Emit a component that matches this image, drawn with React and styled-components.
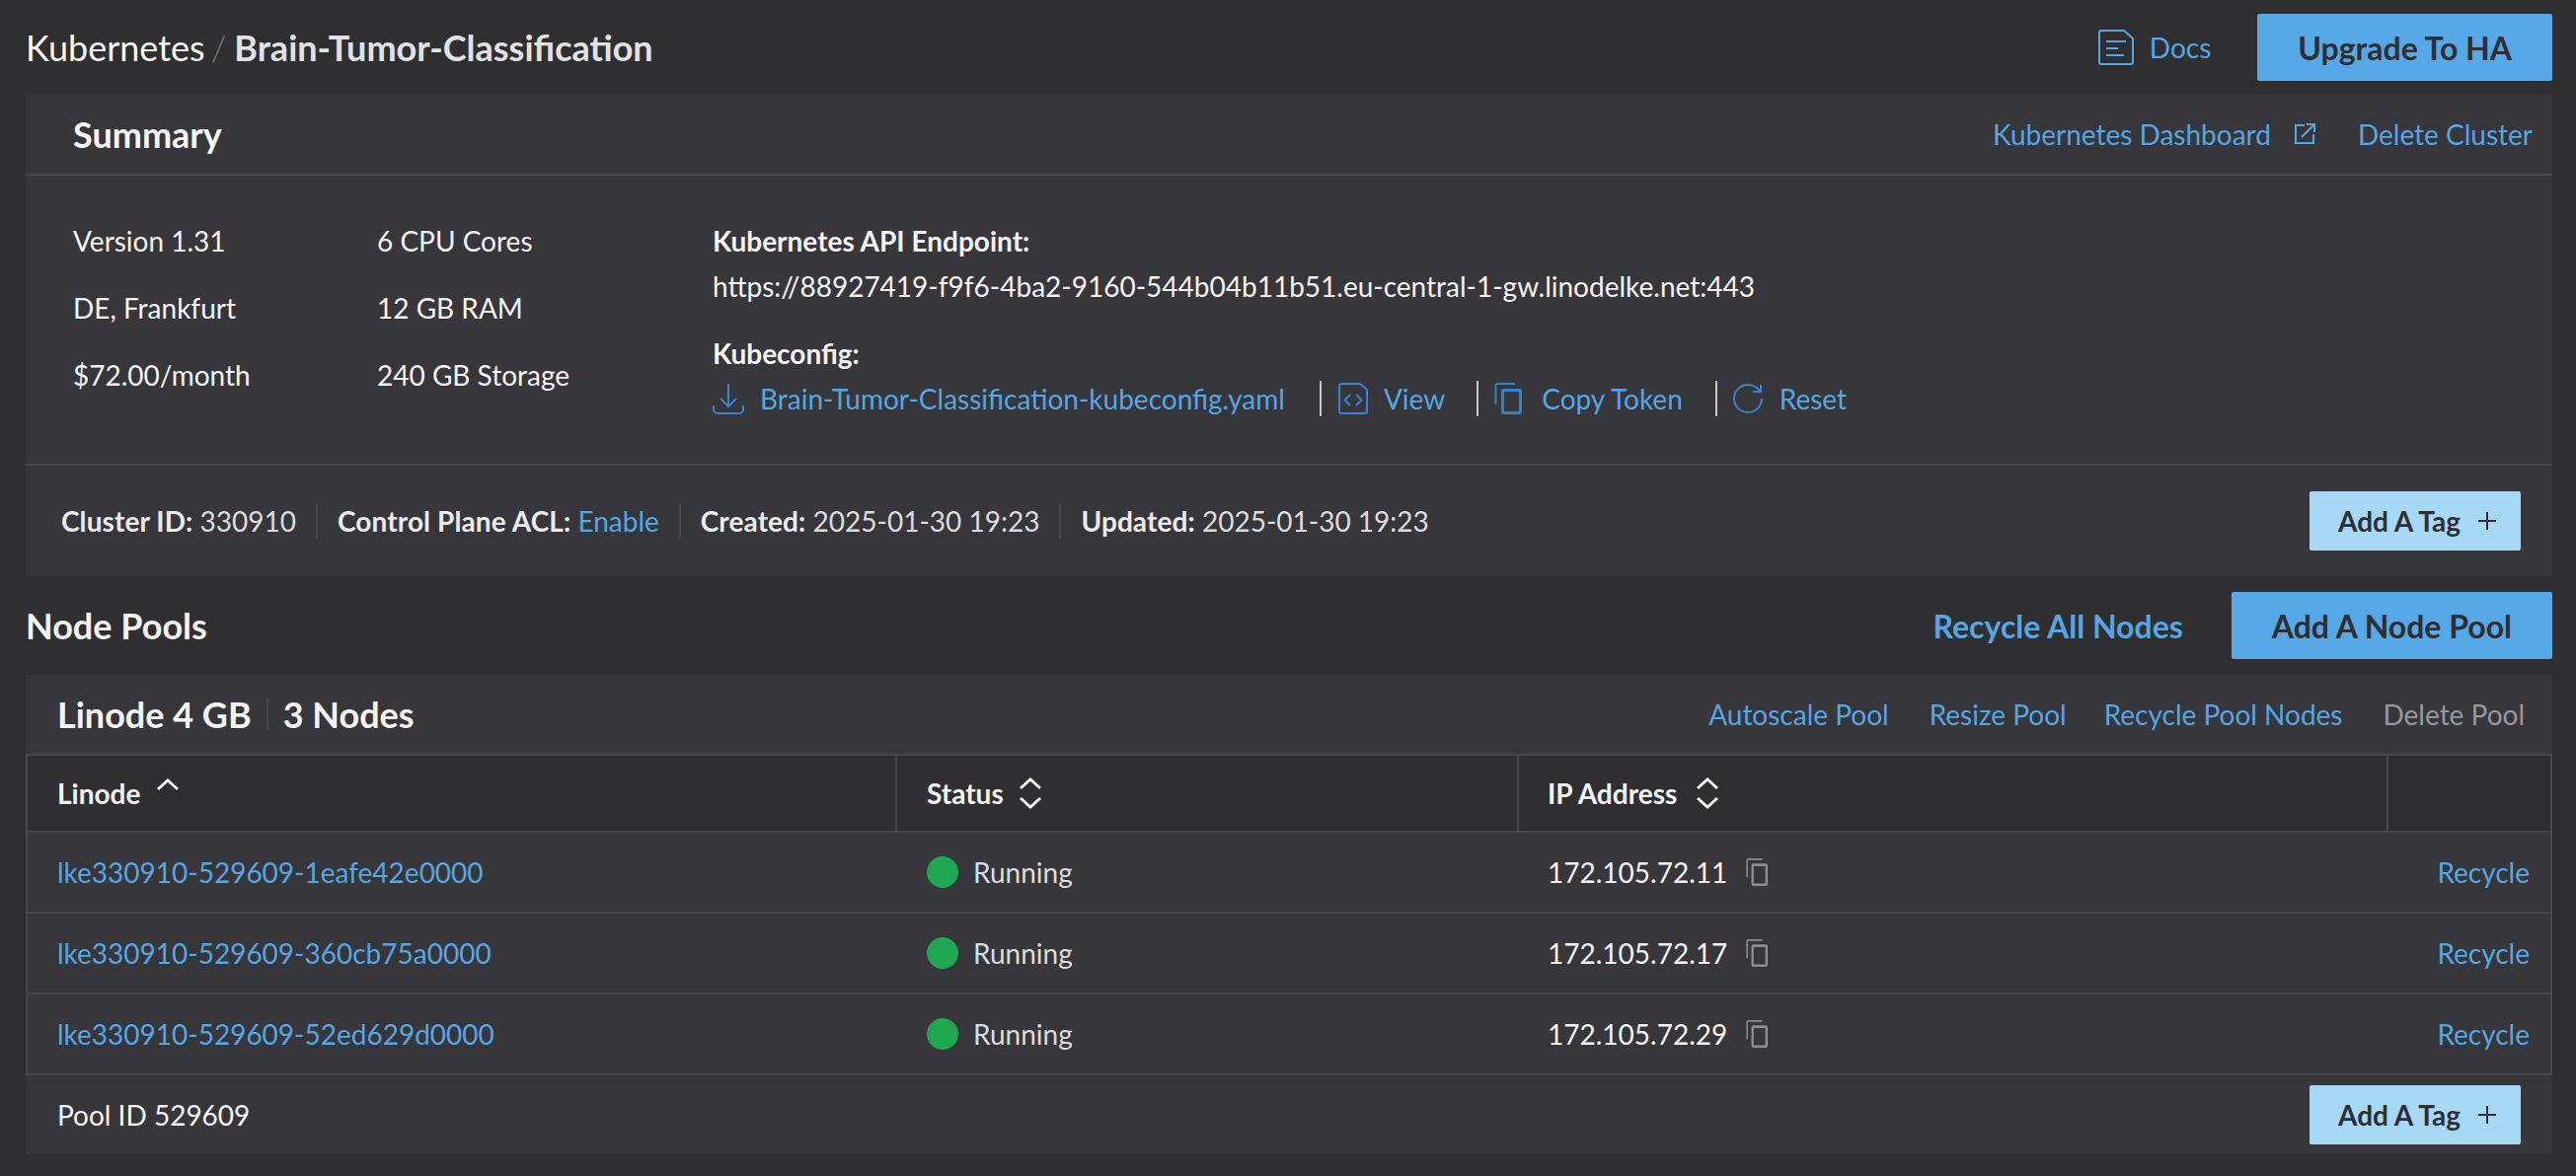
import React from 'react'
import styled, { createGlobalStyle } from 'styled-components'

const GlobalStyle = createGlobalStyle`
  html, body { margin: 0; padding: 0; background: #2f2f31; }
  body { font-family: Lato, "Open Sans", sans-serif; color: #f4f4f5; }
  * { box-sizing: border-box; }
`

const LINK = '#56a6e2'
const ICON = '#3b82d0'

const Page = styled.div`
  width: 2610px;
  height: 1192px;
  padding: 0 24px 0 26px;
  background: #2f2f31;
  font-size: 28px;
  overflow: hidden;
`

const TopBar = styled.header`
  height: 96px;
  display: flex;
  align-items: center;
  justify-content: space-between;
`

const Crumbs = styled.h1`
  margin: 0;
  display: flex;
  align-items: center;
  font-size: 36px;
  font-weight: 400;
  color: #f6f6f7;
`

const Slash = styled.span`
  margin: 0 8px 0 6px;
  color: #77777c;
  font-weight: 300;
`

const CrumbStrong = styled.span`
  font-weight: 700;
  color: #e2e2e5;
`

const TopActions = styled.div`
  display: flex;
  align-items: center;
`

const DocsLink = styled.a`
  display: flex;
  align-items: center;
  gap: 16px;
  margin-right: 47px;
  color: ${LINK};
`

const PrimaryButton = styled.button`
  height: 68px;
  padding: 0 ${({ $pad }) => $pad}px;
  border: none;
  border-radius: 2px;
  background: #56a8e6;
  color: #2f2f33;
  font: 700 32px Lato, sans-serif;
`

const Panel = styled.section`
  background: #36363b;
`

const SummaryHead = styled.div`
  height: 82px;
  padding: 0 20px 0 48px;
  display: flex;
  align-items: center;
  justify-content: space-between;
  border-bottom: 2px solid #47474c;
`

const SummaryTitle = styled.h2`
  margin: 0;
  font-size: 36px;
  font-weight: 700;
  color: #f6f6f7;
`

const HeadLinks = styled.div`
  display: flex;
  align-items: center;
`

const TextLink = styled.a`
  display: inline-flex;
  align-items: center;
  color: ${({ $muted }) => ($muted ? '#98989d' : LINK)};
  margin-left: ${({ $ml }) => $ml || 0}px;
  white-space: nowrap;
`

const SummaryBody = styled.div`
  height: 294px;
  padding: 32px 0 0 48px;
  display: grid;
  grid-template-columns: 308px 340px 1fr;
  border-bottom: 2px solid #47474c;
`

const SpecLine = styled.div`
  height: 68px;
  line-height: 68px;
`

const Endpoint = styled.div`
  margin-top: 11px;
`

const InfoLine = styled.div`
  height: 46px;
  line-height: 46px;
  font-weight: ${({ $bold }) => ($bold ? 700 : 400)};
  margin-top: ${({ $gap }) => $gap || 0}px;
`

const ConfigRow = styled.div`
  height: 46px;
  display: flex;
  align-items: center;
`

const ConfigLink = styled.a`
  display: flex;
  align-items: center;
  gap: ${({ $gap }) => $gap}px;
  color: ${LINK};
  white-space: nowrap;
`

const ConfigSep = styled.span`
  width: 2px;
  height: 36px;
  margin: 0 ${({ $r }) => $r}px 0 ${({ $l }) => $l}px;
  background: #c9c9cc;
`

const MetaRow = styled.div`
  height: 112px;
  padding: 0 32px 0 36px;
  display: flex;
  align-items: center;
  color: #dcdcdf;
`

const MetaItem = styled.span`
  color: #dcdcdf;
  b { color: #ececee; font-weight: 700; letter-spacing: 0.1px; }
  a { color: ${LINK}; }
`

const MetaSep = styled.span`
  width: 2px;
  height: 36px;
  margin: 0 20px;
  background: #47474c;
`

const TagButton = styled.button`
  width: 214px;
  height: 60px;
  margin-left: auto;
  padding: 0 0 0 29px;
  display: flex;
  align-items: center;
  gap: 18px;
  border: none;
  border-radius: 2px;
  background: #a7d9f7;
  color: #2f2f33;
  font: 700 28px Lato, sans-serif;
`

const SectionHead = styled.div`
  height: 100px;
  display: flex;
  align-items: center;
  justify-content: space-between;
`

const SectionTitle = styled.h2`
  margin: 0;
  font-size: 36px;
  font-weight: 700;
  color: #f2f2f3;
`

const SectionActions = styled.div`
  display: flex;
  align-items: center;
  gap: 49px;
`

const BoldLink = styled.a`
  color: ${LINK};
  font-size: 32px;
  font-weight: 700;
`

const PoolHead = styled.div`
  height: 80px;
  padding: 0 28px 0 32px;
  display: flex;
  align-items: center;
  justify-content: space-between;
`

const PoolTitle = styled.h3`
  margin: 0;
  display: flex;
  align-items: center;
  font-size: 36px;
  font-weight: 700;
  color: #f4f4f5;
`

const PoolSep = styled.span`
  width: 2px;
  height: 32px;
  margin: 0 15px;
  background: #47474c;
`

const NodeTable = styled.div`
  border: 2px solid #47474c;
`

const HeadRow = styled.div`
  height: 76px;
  display: grid;
  grid-template-columns: 881px 630px 881px 1fr;
  background: #2f2f31;
`

const HeadCell = styled.div`
  padding-left: ${({ $pad }) => $pad}px;
  display: flex;
  align-items: center;
  gap: ${({ $gap }) => $gap || 16}px;
  font-weight: 700;
  border-right: ${({ $last }) => ($last ? 'none' : '2px solid #47474c')};
`

const BodyRow = styled.div`
  height: 82px;
  padding-right: 21px;
  display: grid;
  grid-template-columns: 881px 630px 1fr auto;
  align-items: center;
  border-top: 2px solid #47474c;
`

const NodeLink = styled.a`
  padding-left: 30px;
  color: ${LINK};
`

const StatusCell = styled.div`
  padding-left: 30px;
  display: flex;
  align-items: center;
  gap: 15px;
  color: #dcdcdf;
`

const StatusDot = styled.span`
  width: 32px;
  height: 32px;
  border-radius: 50%;
  background: #1fa651;
`

const IpCell = styled.div`
  padding-left: 29px;
  display: flex;
  align-items: center;
  gap: 19px;
`

const PoolFoot = styled.div`
  height: 80px;
  padding: 0 32px 0 32px;
  display: flex;
  align-items: center;
`

const Chevrons = ({ up = true, down = true }) => (
  <svg width="24" height="32" viewBox="0 0 24 32" fill="none" stroke="#f4f4f5" strokeWidth="3" style={{ marginTop: down ? 0 : 2 }}>
    {up && <path d="M2 11 12 2l10 9" />}
    {down && <path d="M2 21l10 9 10-9" />}
  </svg>
)

const DocsIcon = () => (
  <svg width="36" height="36" viewBox="0 0 36 36" fill="none" stroke={LINK} strokeWidth="2">
    <path d="M3 1h23l9 8v24a2 2 0 0 1-2 2H3a2 2 0 0 1-2-2V3a2 2 0 0 1 2-2z" />
    <path d="M8 12h20M8 19h12M8 26h18" />
  </svg>
)

const ExternalIcon = () => (
  <svg width="22" height="22" viewBox="0 0 22 22" fill="none" stroke={LINK} strokeWidth="2">
    <path d="M11 2H2v18h18v-9" />
    <path d="M8 14 20 2M13 1h8v8" />
  </svg>
)

const DownloadIcon = () => (
  <svg width="32" height="32" viewBox="0 0 32 32" fill="none" stroke={ICON} strokeWidth="2">
    <path d="M16 1v23M8 16l8 8 8-8" />
    <path d="M1 23v4a4 4 0 0 0 4 4h22a4 4 0 0 0 4-4v-4" />
  </svg>
)

const CodeIcon = () => (
  <svg width="30" height="32" viewBox="0 0 30 32" fill="none" stroke={ICON} strokeWidth="2">
    <path d="M3 1h19l7 6v22a2 2 0 0 1-2 2H3a2 2 0 0 1-2-2V3a2 2 0 0 1 2-2z" />
    <path d="M12 12l-5.5 5.5 5.5 5.5M18 12l5.5 5.5-5.5 5.5" />
  </svg>
)

const CopyIcon = ({ color = '#2b84cc', w = 28, h = 32 }) => (
  <svg width={w} height={h} viewBox="0 0 28 32" preserveAspectRatio="none" fill="none" stroke={color}>
    <path d="M1.5 22V3a2 2 0 0 1 2-2H21" strokeWidth="2" />
    <rect x="8.5" y="7.5" width="18" height="23" rx="1" strokeWidth="3" />
  </svg>
)

const ResetIcon = () => (
  <svg width="30" height="30" viewBox="0 0 30 30" fill="none" stroke={ICON} strokeWidth="2">
    <path d="M29 15A14 14 0 1 1 15 1c3.8 0 7.4 1.5 10 4l3 3" />
    <path d="M28 1v7h-8" />
  </svg>
)

const PlusIcon = () => (
  <svg width="18" height="18" viewBox="0 0 18 18" stroke="#2f2f33" strokeWidth="2">
    <path d="M9 0v18M0 9h18" />
  </svg>
)

const nodes = [
  { name: 'lke330910-529609-1eafe42e0000', ip: '172.105.72.11' },
  { name: 'lke330910-529609-360cb75a0000', ip: '172.105.72.17' },
  { name: 'lke330910-529609-52ed629d0000', ip: '172.105.72.29' },
]

function App() {
  return (
    <Page>
      <GlobalStyle />
      <TopBar>
        <Crumbs>
          Kubernetes<Slash>/</Slash><CrumbStrong>Brain-Tumor-Classification</CrumbStrong>
        </Crumbs>
        <TopActions>
          <DocsLink><DocsIcon />Docs</DocsLink>
          <PrimaryButton $pad={41}>Upgrade To HA</PrimaryButton>
        </TopActions>
      </TopBar>

      <Panel>
        <SummaryHead>
          <SummaryTitle>Summary</SummaryTitle>
          <HeadLinks>
            <TextLink>Kubernetes Dashboard</TextLink>
            <TextLink $ml={23}><ExternalIcon /></TextLink>
            <TextLink $ml={43}>Delete Cluster</TextLink>
          </HeadLinks>
        </SummaryHead>
        <SummaryBody>
          <div>
            <SpecLine>Version 1.31</SpecLine>
            <SpecLine>DE, Frankfurt</SpecLine>
            <SpecLine>$72.00/month</SpecLine>
          </div>
          <div>
            <SpecLine>6 CPU Cores</SpecLine>
            <SpecLine>12 GB RAM</SpecLine>
            <SpecLine>240 GB Storage</SpecLine>
          </div>
          <Endpoint>
            <InfoLine $bold>Kubernetes API Endpoint:</InfoLine>
            <InfoLine>https://88927419-f9f6-4ba2-9160-544b04b11b51.eu-central-1-gw.linodelke.net:443</InfoLine>
            <InfoLine $bold $gap={22}>Kubeconfig:</InfoLine>
            <ConfigRow>
              <ConfigLink $gap={16}><DownloadIcon />Brain-Tumor-Classification-kubeconfig.yaml</ConfigLink>
              <ConfigSep $l={35} $r={17} />
              <ConfigLink $gap={16}><CodeIcon />View</ConfigLink>
              <ConfigSep $l={32} $r={16} />
              <ConfigLink $gap={20}><CopyIcon />Copy Token</ConfigLink>
              <ConfigSep $l={33} $r={16} />
              <ConfigLink $gap={17}><ResetIcon />Reset</ConfigLink>
            </ConfigRow>
          </Endpoint>
        </SummaryBody>
        <MetaRow>
          <MetaItem><b>Cluster ID:</b> 330910</MetaItem>
          <MetaSep />
          <MetaItem><b>Control Plane ACL:</b> <a>Enable</a></MetaItem>
          <MetaSep />
          <MetaItem><b>Created:</b> 2025-01-30 19:23</MetaItem>
          <MetaSep />
          <MetaItem><b>Updated:</b> 2025-01-30 19:23</MetaItem>
          <TagButton>Add A Tag<PlusIcon /></TagButton>
        </MetaRow>
      </Panel>

      <SectionHead>
        <SectionTitle>Node Pools</SectionTitle>
        <SectionActions>
          <BoldLink>Recycle All Nodes</BoldLink>
          <PrimaryButton $pad={41}>Add A Node Pool</PrimaryButton>
        </SectionActions>
      </SectionHead>

      <Panel>
        <PoolHead>
          <PoolTitle>Linode 4 GB<PoolSep />3 Nodes</PoolTitle>
          <HeadLinks>
            <TextLink>Autoscale Pool</TextLink>
            <TextLink $ml={41}>Resize Pool</TextLink>
            <TextLink $ml={38}>Recycle Pool Nodes</TextLink>
            <TextLink $ml={41} $muted>Delete Pool</TextLink>
          </HeadLinks>
        </PoolHead>
        <NodeTable>
          <HeadRow>
            <HeadCell $pad={30}>Linode<Chevrons down={false} /></HeadCell>
            <HeadCell $pad={30} $gap={15}>Status<Chevrons /></HeadCell>
            <HeadCell $pad={29} $gap={19}>IP Address<Chevrons /></HeadCell>
            <HeadCell $last />
          </HeadRow>
          {nodes.map(node => (
            <BodyRow key={node.name}>
              <NodeLink>{node.name}</NodeLink>
              <StatusCell><StatusDot />Running</StatusCell>
              <IpCell>{node.ip}<CopyIcon color="#8d8d92" w={22} h={28} /></IpCell>
              <TextLink>Recycle</TextLink>
            </BodyRow>
          ))}
        </NodeTable>
        <PoolFoot>
          Pool ID 529609
          <TagButton>Add A Tag<PlusIcon /></TagButton>
        </PoolFoot>
      </Panel>
    </Page>
  )
}

export default App
